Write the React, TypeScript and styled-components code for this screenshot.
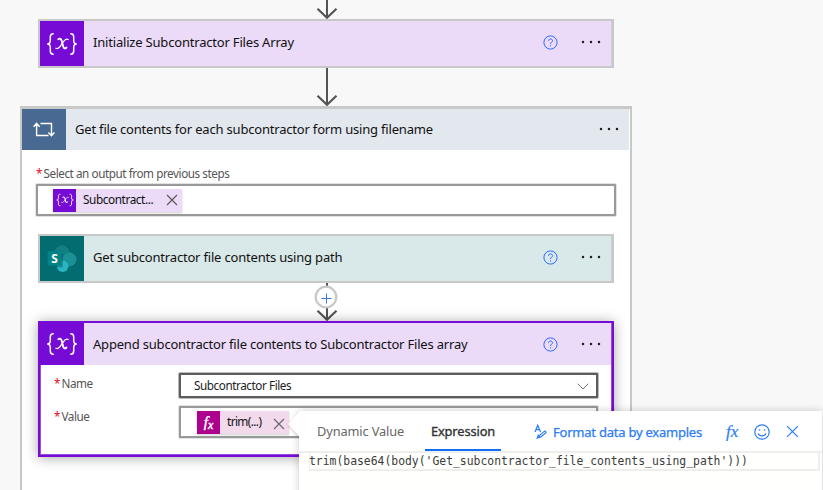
import React from "react";
import styled, { createGlobalStyle } from "styled-components";

const UI_FONT = '"Noto Sans", "Open Sans", sans-serif';

const GlobalStyle = createGlobalStyle`
  *, *::before, *::after { box-sizing: border-box; }
  body { margin: 0; background: #f8f8f8; overflow: hidden; }
`;

const Page = styled.main`
  position: relative;
  width: 823px;
  height: 490px;
  overflow: hidden;
  background: #f8f8f8;
  font-family: ${UI_FONT};
  font-size: 13px;
  color: #111;
`;

const Flow = styled.div`
  width: 612px;
  margin-left: 20px;
  display: flex;
  flex-direction: column;
`;

const Connector = styled.div<{ $height: number }>`
  height: ${(p) => p.$height}px;
  flex: none;
  display: flex;
  justify-content: center;
  padding-left: 2px;
  svg { display: block; overflow: visible; }
`;

const Card = styled.section<{ $selected?: boolean; $height: number }>`
  flex: none;
  width: 576px;
  height: ${(p) => p.$height}px;
  align-self: center;
  background: #fff;
  border: 2px solid ${(p) => (p.$selected ? "#770bd6" : "#c8c8c8")};
  box-shadow: ${(p) =>
    p.$selected
      ? "inset 0 0 0 1px #9a4be0, 0 1px 12px rgba(0,0,0,.34)"
      : "inset 0 0 0 1px #d0cece"};
`;

const CardHead = styled.header<{ $bg: string; $height: number }>`
  display: flex;
  align-items: center;
  height: ${(p) => p.$height}px;
  margin-right: 1px;
  background: ${(p) => p.$bg};
`;

const IconTile = styled.span<{ $bg: string; $w: number }>`
  flex: none;
  display: flex;
  align-items: center;
  justify-content: center;
  width: ${(p) => p.$w}px;
  height: 100%;
  background: ${(p) => p.$bg};
  svg { display: block; }
`;

const Title = styled.h2<{ $lift?: number }>`
  flex: 1;
  margin: 0 0 0 9px;
  padding-bottom: ${(p) => p.$lift ?? 0}px;
  font-size: 13px;
  font-weight: 400;
  line-height: 20px;
  white-space: nowrap;
  letter-spacing: -0.19px;
`;

const HeadActions = styled.span<{ $lift?: number }>`
  display: flex;
  align-items: center;
  gap: 23.5px;
  margin-right: 10px;
  padding-bottom: ${(p) => p.$lift ?? 0}px;
  svg { display: block; }
`;

const Loop = styled.section`
  flex: none;
  display: flex;
  flex-direction: column;
  height: 420px;
  border: 2px solid #c8c8c8;
  border-top-width: 3px;
  background: #fff;
`;

const Label = styled.label`
  display: block;
  font-size: 11.7px;
  line-height: 16px;
  color: #555;
  white-space: nowrap;
  letter-spacing: -0.43px;
  &::before { content: "*"; color: #e00b1c; margin-right: 1.5px; }
`;

const Field = styled.div<{ $strong?: boolean; $w: number; $h: number }>`
  display: flex;
  align-items: center;
  width: ${(p) => p.$w}px;
  height: ${(p) => p.$h}px;
  border: 2px solid ${(p) => (p.$strong ? "#5c5c5c" : "#999")};
  box-shadow: 0 0 0 1px ${(p) => (p.$strong ? "#bbb" : "#e2e2e2")};
  background: #fff;
  border-radius: 1px;
`;

const LoopField = styled.div`
  padding: 15px 0 0 14px;
  height: 84px;
  ${Field} { margin-top: 3px; padding-left: 15px; }
`;

const Token = styled.span<{ $bg: string; $w: number }>`
  display: flex;
  align-items: center;
  width: ${(p) => p.$w}px;
  height: 23px;
  background: ${(p) => p.$bg};
  box-shadow: 0 1px 2px rgba(0,0,0,.2);
  svg { display: block; flex: none; }
`;

const TokenText = styled.span<{ $spacing: number }>`
  flex: 1;
  padding: 0 0 2px 7px;
  font-size: 11.8px;
  line-height: 18px;
  white-space: nowrap;
  letter-spacing: ${(p) => p.$spacing}px;
`;

const TokenClose = styled.span<{ $drop?: number }>`
  margin-right: 4px;
  padding-top: ${(p) => p.$drop ?? 0}px;
`;

const FormRow = styled.div<{ $gap: number }>`
  display: flex;
  align-items: flex-start;
  margin-top: ${(p) => p.$gap}px;
  padding-left: 14px;
  ${Label} { width: 125px; padding-top: 2px; }
`;

const ValueField = styled(Field)`
  padding-left: 16px;
`;

const SelectText = styled.span`
  flex: 1;
  padding: 0 0 2px 13px;
  font-size: 11.7px;
  letter-spacing: -0.42px;
  color: #222;
`;

const Callout = styled.aside`
  position: absolute;
  left: 299px;
  top: 411px;
  width: 523px;
  height: 100px;
  background: #fffffe;
  box-shadow: 0 0 8px rgba(0,0,0,.2);
`;

const Beak = styled.svg`
  position: absolute;
  left: -12px;
  top: 0;
  filter: drop-shadow(-1px 1px 1px rgba(0,0,0,.12));
`;

const Tabs = styled.nav`
  display: flex;
  align-items: stretch;
  height: 42px;
  padding-left: 18px;
  background: #fff;
  border-bottom: 2px solid #eeeeed;
`;

const Tab = styled.span<{ $active?: boolean; $w: number; $after: number; $spacing: number }>`
  width: ${(p) => p.$w}px;
  height: 40px;
  flex: none;
  margin-right: ${(p) => p.$after}px;
  text-align: center;
  font-size: 12.8px;
  line-height: 41px;
  white-space: nowrap;
  letter-spacing: ${(p) => p.$spacing}px;
  color: ${(p) => (p.$active ? "#333" : "#666")};
  -webkit-text-stroke: ${(p) => (p.$active ? "0.35px #333" : "0")};
  border-bottom: ${(p) => (p.$active ? "2px solid #116ef5" : "none")};
`;

const Tools = styled.span`
  display: flex;
  align-items: center;
  padding-top: 1px;
  color: #2b7cf6;
  svg { display: block; flex: none; }
`;

const FormatLink = styled.span`
  width: 170px;
  padding-left: 6px;
  font-size: 13px;
  line-height: 20px;
  white-space: nowrap;
  letter-spacing: -0.23px;
  -webkit-text-stroke: 0.25px #2b7cf6;
`;

const ToolIcons = styled.span`
  display: flex;
  align-items: center;
  padding-left: 9px;
  svg { margin-left: 16px; }
`;

const Editor = styled.code`
  display: block;
  height: 18px;
  margin: 0 2px 0 10px;
  border: 2px solid #eeeeec;
  border-top: none;
  border-left-width: 1px;
  font-family: "DejaVu Sans Mono", monospace;
  font-size: 11.4px;
  line-height: 16px;
  text-indent: -1px;
  letter-spacing: 0;
  white-space: nowrap;
  color: #3c3c3c;
`;

function Arrow({ length }: { length: number }) {
  return (
    <svg width="22" height={length} fill="none" stroke="#545454">
      <path d={`M11 0V${length - 1}`} strokeWidth="2" />
      <path d={`M1.5 ${length - 10.2}L11 ${length - 1.3}L20.5 ${length - 10.2}`} strokeWidth="2.2" />
    </svg>
  );
}

function AddArrow() {
  return (
    <svg width="24" height="38" fill="none">
      <path d="M12 0V37" stroke="#545454" strokeWidth="2" />
      <path d="M2.5 27.8L12 36.7L21.5 27.8" stroke="#545454" strokeWidth="2.2" />
      <circle cx="11" cy="14" r="10.3" fill="#fff" stroke="#c8c8c8" strokeWidth="2.3" />
      <path d="M6.5 15.5h10M11.5 10.5v10" stroke="#3a78d0" />
    </svg>
  );
}

function VariableIcon({ size }: { size: number }) {
  return (
    <svg width={size} height={size} viewBox="0 0 32 32" fill="none" stroke="#fff" strokeLinecap="round">
      <path d="M7.2 5.8C4.6 5.8 4.3 7 4.3 9v3.5C4.3 15 3.7 16 1.2 16c2.5 0 3.1 1 3.1 3.5V23c0 2 .3 3.2 2.9 3.2" strokeWidth="1.5" />
      <path d="M24.8 5.8c2.6 0 2.9 1.2 2.9 3.2v3.5c0 2.5.6 3.5 3.1 3.5-2.5 0-3.1 1-3.1 3.5V23c0 2-.3 3.2-2.9 3.2" strokeWidth="1.5" />
      <path d="M12.3 11.2c1.9-1.1 2.9-.3 3.4 1.6l1.5 5.8c.5 1.9 1.6 2.6 3.3.9" strokeWidth="1.8" />
      <path d="M22.2 11.5c-1.8-1-3.2 0-4.7 2.2l-3.1 4.5c-1.5 2.1-2.9 3-4.5 2" strokeWidth="1.2" />
    </svg>
  );
}

function LoopIcon() {
  return (
    <svg width="22" height="16" viewBox="0 0 22 16" fill="none" stroke="#fff" strokeWidth="1.4">
      <path d="M.6 4.8L3.6 1.3L6.6 4.8M3.6 1.5V13.5H15.5M7.5 1.5H18.5V13.5M15.4 10.5L18.5 13.8L21.4 10.5" />
    </svg>
  );
}

function SharePointIcon() {
  return (
    <svg width="30" height="30" viewBox="0 0 30 30">
      <circle cx="15" cy="9.3" r="8.4" fill="#025a5e" />
      <circle cx="15" cy="9" r="7.9" fill="#117f83" />
      <circle cx="22.4" cy="15.9" r="7.5" fill="#025a5e" />
      <circle cx="22.4" cy="15.5" r="7.2" fill="#1b9196" />
      <circle cx="15.6" cy="22.2" r="5.8" fill="#28b5c1" />
      <path d="M8 9h7.6v14.2H9z" fill="#024c50" opacity=".4" />
      <rect x=".6" y="7.3" width="14" height="14.3" rx="1" fill="#038387" />
      <text x="7.6" y="18.6" textAnchor="middle" fill="#fff" fontFamily="Noto Sans" fontWeight="700" fontSize="12">S</text>
    </svg>
  );
}

function HelpIcon() {
  return (
    <svg width="15" height="15" viewBox="0 0 15 15" fill="none" stroke="#2f6bff">
      <circle cx="7.5" cy="7.5" r="6.6" strokeWidth="1" />
      <path d="M5.5 5.8C5.6 3.3 9.5 3.4 9.5 5.7C9.5 7.2 7.5 7.4 7.5 9.1M7.5 10.3v1.1" strokeWidth="1" />
    </svg>
  );
}

function MoreIcon() {
  return (
    <svg width="20" height="4" fill="#222">
      <circle cx="2" cy="2" r="1.25" />
      <circle cx="10" cy="2" r="1.25" />
      <circle cx="18" cy="2" r="1.25" />
    </svg>
  );
}

function CloseIcon({ size, color }: { size: number; color: string }) {
  return (
    <svg width={size} height={size} viewBox="0 0 12 12" stroke={color} strokeWidth="1.1">
      <path d="M1 1L11 11M11 1L1 11" />
    </svg>
  );
}

const FxGlyph = styled.i<{ $size: number; $color: string; $bold?: boolean }>`
  font-family: "Liberation Serif", serif;
  font-size: ${(p) => p.$size}px;
  line-height: 20px;
  color: ${(p) => p.$color};
  -webkit-text-stroke: ${(p) => (p.$bold ? 0.4 : 0.2)}px ${(p) => p.$color};
  sub { font-size: 0.8em; vertical-align: -2px; line-height: 0; }
`;

function FormatIcon() {
  return (
    <svg width="13" height="16" viewBox="0 0 13 16" fill="none" stroke="#2b7cf6" strokeWidth="1.2">
      <path d="M1 8L3.7 1.2L6.6 8M2 5.6h3.5" />
      <path d="M3.2 14.2l1-3 1.4 1.9zM5.2 11.6l5-4.2c1.2-.8 2.3.7 1.3 1.6l-5 4.2-2.5.5" />
    </svg>
  );
}

function SmileIcon() {
  return (
    <svg width="16" height="16" viewBox="0 0 16 16" fill="none" stroke="#2b7cf6" strokeWidth="1.2">
      <circle cx="8" cy="8" r="7.2" />
      <path d="M4 9.5c1.4 3.2 6.6 3.2 8 0" />
      <circle cx="5.5" cy="6" r=".8" fill="#2b7cf6" stroke="none" />
      <circle cx="10.5" cy="6" r=".8" fill="#2b7cf6" stroke="none" />
    </svg>
  );
}

const Chevron = styled.svg`
  margin: 2px 7px 0 0;
`;

export default function App() {
  return (
    <Page>
      <GlobalStyle />
      <Flow>
        <Connector $height={19}><Arrow length={19} /></Connector>
        <Card $height={49}>
          <CardHead $bg="#ebdaf8" $height={45}>
            <IconTile $bg="#770bd6" $w={44}><VariableIcon size={32} /></IconTile>
            <Title $lift={3}>Initialize Subcontractor Files Array</Title>
            <HeadActions $lift={3}><HelpIcon /><MoreIcon /></HeadActions>
          </CardHead>
        </Card>
        <Connector $height={38}><Arrow length={38} /></Connector>
        <Loop>
          <CardHead $bg="#e3e8ef" $height={41}>
            <IconTile $bg="#486991" $w={44}><LoopIcon /></IconTile>
            <Title $lift={2}>Get file contents for each subcontractor form using filename</Title>
            <HeadActions $lift={1}><MoreIcon /></HeadActions>
          </CardHead>
          <LoopField>
            <Label>Select an output from previous steps</Label>
            <Field $w={580} $h={32}>
              <Token $bg="#ebdaf8" $w={129}>
                <IconTile $bg="#770bd6" $w={23}><VariableIcon size={18} /></IconTile>
                <TokenText $spacing={-0.42}>Subcontract...</TokenText>
                <TokenClose><CloseIcon size={12} color="#555" /></TokenClose>
              </Token>
            </Field>
          </LoopField>
          <Card $height={49}>
            <CardHead $bg="#d9e8e8" $height={45}>
              <IconTile $bg="#036c70" $w={44}><SharePointIcon /></IconTile>
              <Title $lift={3}>Get subcontractor file contents using path</Title>
              <HeadActions $lift={3}><HelpIcon /><MoreIcon /></HeadActions>
            </CardHead>
          </Card>
          <Connector $height={38}><AddArrow /></Connector>
          <Card $height={136} $selected>
            <CardHead $bg="#ebdaf8" $height={42}>
              <IconTile $bg="#770bd6" $w={44}><VariableIcon size={32} /></IconTile>
              <Title>Append subcontractor file contents to Subcontractor Files array</Title>
              <HeadActions><HelpIcon /><MoreIcon /></HeadActions>
            </CardHead>
            <FormRow $gap={8}>
              <Label>Name</Label>
              <Field $strong $w={419} $h={25}>
                <SelectText>Subcontractor Files</SelectText>
                <Chevron width="12" height="7" fill="none" stroke="#777"><path d="M.7.7L6 6L11.3.7" /></Chevron>
              </Field>
            </FormRow>
            <FormRow $gap={8}>
              <Label>Value</Label>
              <ValueField $w={419} $h={32}>
                <Token $bg="#f2d9ec" $w={92}>
                  <IconTile $bg="#ad008c" $w={23}>
                    <FxGlyph $size={15} $color="#fff" $bold>f<sub>x</sub></FxGlyph>
                  </IconTile>
                  <TokenText $spacing={-0.6}>trim(...)</TokenText>
                  <TokenClose $drop={3}><CloseIcon size={12} color="#666" /></TokenClose>
                </Token>
              </ValueField>
            </FormRow>
          </Card>
        </Loop>
      </Flow>
      <Callout>
        <Beak width="13" height="26"><path d="M13 0L1 13L13 26Z" fill="#fff" /></Beak>
        <Tabs>
          <Tab $w={87} $after={21} $spacing={-0.12}>Dynamic Value</Tab>
          <Tab $active $w={76} $after={33} $spacing={-0.1}>Expression</Tab>
          <Tools>
            <FormatIcon />
            <FormatLink>Format data by examples</FormatLink>
            <ToolIcons>
              <FxGlyph $size={17} $color="#2b7cf6">fx</FxGlyph>
              <SmileIcon />
              <CloseIcon size={13} color="#2b7cf6" />
            </ToolIcons>
          </Tools>
        </Tabs>
        <Editor>trim(base64(body('Get_subcontractor_file_contents_using_path')))</Editor>
      </Callout>
    </Page>
  );
}
